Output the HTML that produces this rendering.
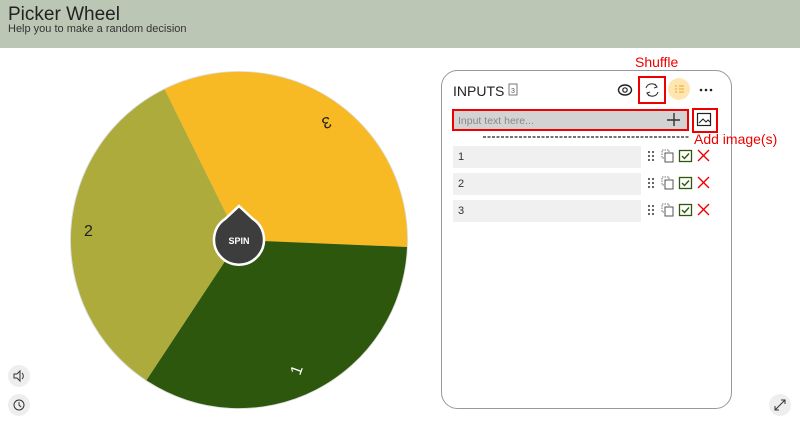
<!DOCTYPE html><html><head><style>
body{margin:0;width:800px;height:423px;background:#fff;font-family:"Liberation Sans",sans-serif;position:relative;overflow:hidden}
.hdr{position:absolute;left:0;top:0;width:800px;height:48px;background:#bcc6b4}
.hdr h1{position:absolute;left:8px;top:4px;margin:0;font-size:19px;font-weight:normal;color:#222}
.hdr p{position:absolute;left:8px;top:23px;margin:0;font-size:11px;color:#333}
.a{position:absolute}
.row{position:absolute;left:453px;width:188px;height:22px;background:#f0f0f0;font-size:11px;color:#333;line-height:22px;text-indent:5px}
.red{color:#e00;font-size:14px}
.box{position:absolute;border:2px solid #e00}
</style></head><body>
<div class="hdr"><h1>Picker Wheel</h1><p>Help you to make a random decision</p></div>
<svg class="a" style="left:0;top:0" width="800" height="423">
<circle cx="239" cy="240" r="169" fill="#ddd"/>
<path d="M239 240 L164.6 89.3 A168 168 0 0 1 407 247 Z" fill="#f7b924"/>
<path d="M239 240 L407 247 A168 168 0 0 1 146.4 380.2 Z" fill="#2c570d"/>
<path d="M239 240 L146.4 380.2 A168 168 0 0 1 164.6 89.3 Z" fill="#adab3c"/>
<text x="84" y="236" font-size="16" fill="#222" font-family="Liberation Sans">2</text>
<text x="0" y="0" font-size="16" fill="#222" font-family="Liberation Sans" transform="translate(329,116) rotate(160)">3</text>
<text x="0" y="0" font-size="16" fill="#fff" font-family="Liberation Sans" transform="translate(300,376) rotate(-70)">1</text>
<path d="M239 206 L253 219 A25 25 0 1 1 225 219 Z" fill="#3d3d3d" stroke="#fff" stroke-width="2.5"/>
<text x="239" y="244" font-size="9" font-weight="bold" fill="#fff" text-anchor="middle" font-family="Liberation Sans">SPIN</text>
<rect x="441.5" y="70.5" width="290" height="338" rx="16" fill="none" stroke="#999"/>
<text x="453" y="96" font-size="14" fill="#222" font-family="Liberation Sans">INPUTS</text>
<rect x="509" y="84" width="8" height="11" fill="none" stroke="#555" stroke-width="0.8"/>
<text x="513" y="93" font-size="7" fill="#555" text-anchor="middle">3</text>
<ellipse cx="625" cy="90" rx="6.5" ry="5" fill="none" stroke="#222" stroke-width="1.4"/><circle cx="625" cy="90" r="2.2" fill="none" stroke="#222" stroke-width="1.2"/>
<path d="M646 88 A6 6 0 0 1 657 87 M658 92 A6 6 0 0 1 647 93 M655 84 L657 87 L654 88 M649 96 L647 93 L650 92" fill="none" stroke="#333" stroke-width="1.1"/>
<circle cx="679" cy="89" r="11" fill="#fde6b0"/>
<path d="M675 86h2M679 86h5M675 89h2M679 89h5M675 92h2M679 92h5" stroke="#f3b43c" stroke-width="1.2"/>
<circle cx="701" cy="90" r="1.3" fill="#222"/><circle cx="706" cy="90" r="1.3" fill="#222"/><circle cx="711" cy="90" r="1.3" fill="#222"/>
<rect x="453" y="111" width="234" height="18" fill="#d3d3d3"/>
<text x="458" y="124" font-size="10.5" fill="#888" font-family="Liberation Sans">Input text here...</text>
<path d="M674 113v13M667 120h13" stroke="#333" stroke-width="1.4"/>
<rect x="697.5" y="113.5" width="13" height="12" fill="none" stroke="#222" stroke-width="1.2"/><path d="M699 123l4-4 3 3 2-2 2 2" fill="none" stroke="#222"/>
<line x1="483" y1="137" x2="690" y2="137" stroke="#222" stroke-dasharray="3 1.5" stroke-width="1.3"/>
<g id="ic">
<g fill="#555"><circle cx="649" cy="152" r="1.1"/><circle cx="653" cy="152" r="1.1"/><circle cx="649" cy="156" r="1.1"/><circle cx="653" cy="156" r="1.1"/><circle cx="649" cy="160" r="1.1"/><circle cx="653" cy="160" r="1.1"/></g>
<rect x="662" y="150" width="7" height="8" fill="none" stroke="#777" stroke-dasharray="1.5 1"/><rect x="665" y="153" width="8" height="9" fill="#fff" stroke="#555"/>
<rect x="679.5" y="150.5" width="12" height="11" fill="none" stroke="#2c570d" stroke-width="1.3"/><path d="M682 156l2.5 2.5 4.5-5" fill="none" stroke="#2c570d" stroke-width="1.4"/>
<path d="M698 150l11 11M709 150l-11 11" stroke="#e00" stroke-width="1.4"/>
</g>
<use href="#ic" y="27"/><use href="#ic" y="54"/>
<rect x="623" y="149" width="15" height="14" rx="2" fill="#2c570d"/>
<text x="630.5" y="159" font-size="8" font-weight="bold" fill="#fff" text-anchor="middle">+1</text>
<circle cx="19" cy="376" r="11" fill="#eee"/><path d="M14 374h3l3-3v10l-3-3h-3z M22 373a4 4 0 0 1 0 6" fill="none" stroke="#333" stroke-width="1"/>
<circle cx="19" cy="405" r="11" fill="#eee"/><circle cx="19" cy="405" r="5" fill="none" stroke="#333"/><path d="M19 402v3l2 2" stroke="#333" fill="none"/>
<circle cx="780" cy="405" r="11" fill="#eee"/><path d="M775 410l10-10M781 400h4v4M775 406v4h4" stroke="#333" fill="none"/>
</svg>
<div class="row" style="top:146px">1</div>
<div class="row" style="top:173px">2</div>
<div class="row" style="top:200px">3</div>
<div class="box" style="left:452px;top:109px;width:233px;height:18px"></div>
<div class="box" style="left:638px;top:76px;width:24px;height:24px"></div>
<div class="box" style="left:692px;top:108px;width:22px;height:21px"></div>
<div class="a red" style="left:635px;top:54px">Shuffle</div>
<div class="a red" style="left:694px;top:131px">Add image(s)</div>
</body></html>
